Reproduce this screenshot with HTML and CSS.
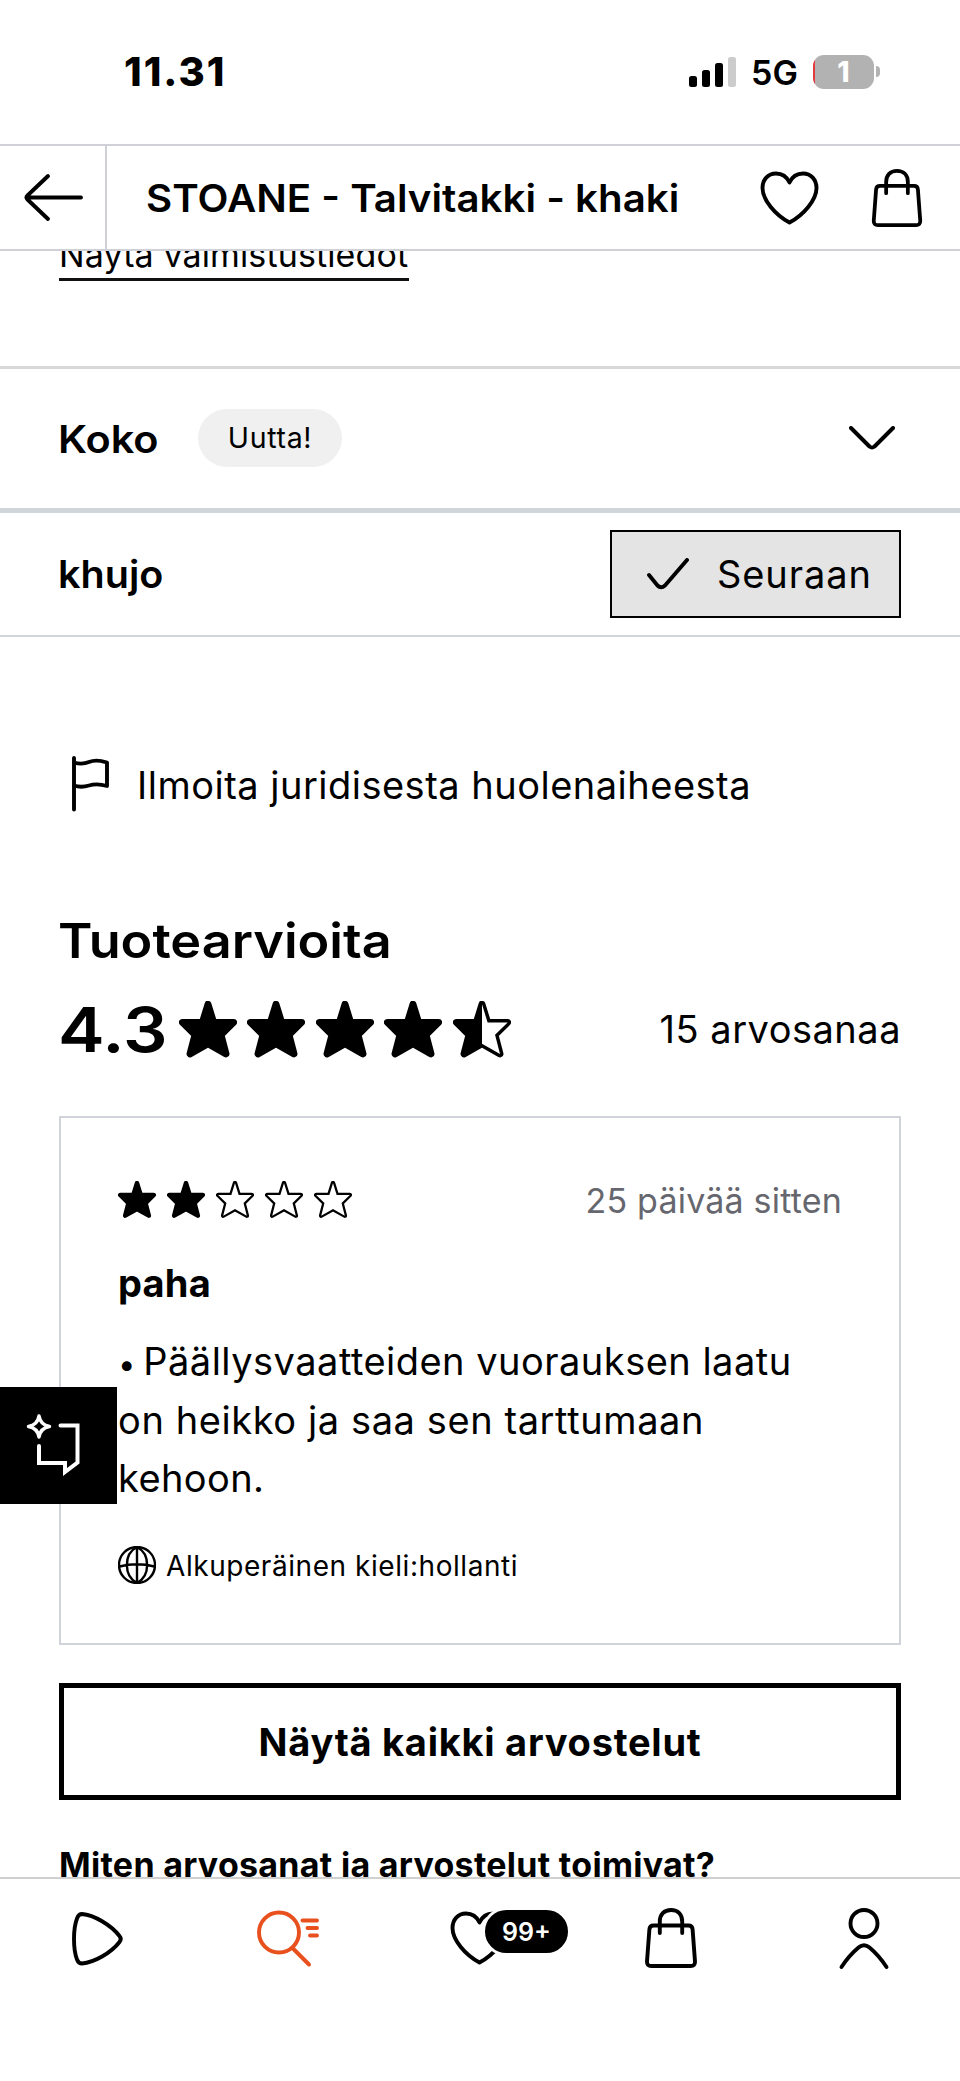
FILE: index.html
```html
<!DOCTYPE html>
<html lang="fi">
<head>
<meta charset="utf-8">
<title>STOANE - Talvitakki - khaki</title>
<link rel="stylesheet" href="styles.css">
</head>
<body>
<svg class="defs" aria-hidden="true">
  <defs>
    <path id="star-shape" d="M28.5 3.2 34 21H53.7L41.3 33.2 46.2 52 28.5 42 10.8 52 15.7 33.2 3.3 21H23Z"/>
    <symbol id="star-full" viewBox="0 0 57 56"><use href="#star-shape" class="star-ink"/></symbol>
    <symbol id="star-empty" viewBox="0 0 57 56"><use href="#star-shape" class="star-ink"/><use href="#star-shape" class="star-hole"/></symbol>
    <clipPath id="right-half"><rect x="28.5" y="0" width="29" height="56"/></clipPath>
    <symbol id="star-half" viewBox="0 0 57 56"><use href="#star-shape" class="star-ink"/><g clip-path="url(#right-half)"><use href="#star-shape" class="star-hole"/></g></symbol>
    <symbol id="heart" viewBox="0 0 64 64"><path d="M31.500 16.500C28.500 10 23 7.500 18 7.500 10 7.500 4.500 13.500 4.500 22 4.500 34 17.500 49 31.500 56.500 45.500 49 58.500 34 58.500 22 58.500 13.500 53 7.500 45 7.500 40 7.500 34.500 10 31.500 16.500Z"/></symbol>
    <symbol id="bag" viewBox="0 0 64 64"><path d="M14.500 19.500H49.500Q53.300 19.500 53.600 23.300L56 55.500Q56.200 60 51.700 60H12.300Q7.800 60 8 55.500L10.400 23.300Q10.700 19.500 14.500 19.500ZM20.800 27V15.500C20.800 8.500 25 4 32 4S43.200 8.500 43.200 15.500V27"/></symbol>
  </defs>
</svg>
<div class="screen">
  <div class="status">
    <span class="clock">11.31</span>
    <div class="signals">
      <svg class="bars" viewBox="0 0 48 32"><rect x="0" y="20" width="8" height="11" rx="2.500"/><rect x="13" y="14" width="8" height="17" rx="2.500"/><rect x="26" y="7" width="8" height="24" rx="2.500"/><rect class="bar-off" x="39" y="1" width="8" height="30" rx="2.500"/></svg>
      <span class="network">5G</span>
      <div class="battery"><span class="battery-level">1</span></div>
      <span class="battery-tip"></span>
    </div>
  </div>
  <header class="header">
    <a class="back"><svg class="icon" viewBox="0 0 64 64"><path d="M60 31.500H6M27 10 6.500 29.500Q4.500 31.500 6.500 33.500L27 53"/></svg></a>
    <h1 class="title"><span>STOANE - Talvitakki - khaki</span></h1>
    <svg class="icon header-heart"><use href="#heart"/></svg>
    <svg class="icon header-bag"><use href="#bag"/></svg>
  </header>
  <main class="content">
    <a class="details-link">Näytä valmistustiedot</a>
    <section class="size-row">
      <span class="row-label size-label">Koko</span>
      <span class="pill">Uutta!</span>
      <svg class="chevron" viewBox="0 0 46 24"><path d="M2 2 20.500 20.500Q23 22.500 25.500 20.500L44 2"/></svg>
    </section>
    <section class="brand-row">
      <span class="row-label brand-label">khujo</span>
      <button class="follow"><svg class="check" viewBox="0 0 42 32"><path d="M2 17 10.500 27.500Q14 31 18 27.500L40 2"/></svg><span>Seuraan</span></button>
    </section>
    <div class="report">
      <svg class="flag" viewBox="0 0 38 56"><path d="M3 2V53.500M3 6.500Q11 9 18 6T36 6.500V30Q26 27 18 29.500T3 29.500"/></svg>
      <span>Ilmoita juridisesta huolenaiheesta</span>
    </div>
    <h2 class="reviews-title"><span>Tuotearvioita</span></h2>
    <div class="summary">
      <div class="score"><span>4.3</span></div>
      <div class="stars stars-large"><svg><use href="#star-full"/></svg><svg><use href="#star-full"/></svg><svg><use href="#star-full"/></svg><svg><use href="#star-full"/></svg><svg><use href="#star-half"/></svg></div>
      <span class="count">15 arvosanaa</span>
    </div>
    <article class="card">
      <div class="card-top">
        <div class="stars stars-small"><svg><use href="#star-full"/></svg><svg><use href="#star-full"/></svg><svg><use href="#star-empty"/></svg><svg><use href="#star-empty"/></svg><svg><use href="#star-empty"/></svg></div>
        <span class="date">25 päivää sitten</span>
      </div>
      <h3 class="card-title">paha</h3>
      <p class="card-text"><span class="line-a"><span class="bullet">•</span>Päällysvaatteiden vuorauksen laatu</span><br><span class="line-b">on heikko ja saa sen tarttumaan</span><br>kehoon.</p>
      <div class="origin">
        <svg class="globe" viewBox="0 0 38 38"><circle cx="19" cy="19" r="18"/><path d="M19 1V37M1.500 20.500Q19 16 36.500 20.500M19 1C5.500 8 5.500 30 19 37M19 1C32.500 8 32.500 30 19 37"/></svg>
        <span>Alkuperäinen kieli:hollanti</span>
      </div>
    </article>
    <button class="all-reviews">Näytä kaikki arvostelut</button>
    <p class="how">Miten arvosanat ja arvostelut toimivat?</p>
  </main>
  <nav class="tabs">
    <a class="tab"><svg class="icon" viewBox="1 0 64 64"><path d="M19 8C31 9 48 19 56.500 30Q59 33 56.500 36C48 47 31 56.500 19 57.500Q15.500 57.500 14 53.500C10 43 10 23 14 12.500Q15.500 8 19 8Z"/></svg></a>
    <a class="tab tab-active"><svg class="icon" viewBox="0 0 64 64"><circle cx="23" cy="26.500" r="20"/><path d="M37 42.500 53 58.500M46.500 14.500H61M51.500 22H61M54 29.500H61"/></svg></a>
    <a class="tab"><svg class="icon"><use href="#heart"/></svg><span class="badge">99+</span></a>
    <a class="tab tab-bag"><svg class="icon"><use href="#bag"/></svg></a>
    <a class="tab"><svg class="icon" viewBox="0 0 64 64"><circle cx="32" cy="17.500" r="13.500"/><path d="M9.500 61Q17 49.500 26.500 41.500 32 37 37.500 41.500 47 49.500 54.500 61"/></svg></a>
  </nav>
  <a class="assistant"><svg viewBox="0 0 117 117"><path class="spark" d="M39 29Q40.500 38 49.500 39.500 40.500 41 39 50 37.500 41 28.500 39.500 37.500 38 39 29Z"/><path d="M60.500 38.500H77.500V75.500L65 85V76H39V59"/></svg></a>
</div>
</body>
</html>
```
FILE: styles.css
```css
* { box-sizing: border-box; }
body { margin: 0; background: #fff; color: #000; font-family: Inter, "Liberation Sans", sans-serif; font-size: 38px; white-space: nowrap; }
h1, h2, h3, p { margin: 0; font-weight: inherit; font-size: inherit; }
button { font: inherit; color: inherit; background: none; padding: 0; }
svg { display: block; flex: none; fill: none; stroke: #000; stroke-width: 3.900; stroke-linecap: round; stroke-linejoin: round; }
.defs { position: absolute; width: 0; height: 0; }
.screen { position: relative; display: flex; flex-direction: column; width: 960px; height: 2081px; overflow: hidden; }
.icon { width: 64px; height: 64px; }

.status { display: flex; justify-content: space-between; height: 144px; padding: 47px 80px 0 124px; }
.clock { font-size: 40px; font-weight: 800; line-height: 49px; letter-spacing: 2px; }
.signals { display: flex; align-items: center; width: 191px; height: 49px; }
.bars { width: 48px; height: 32px; fill: #000; stroke: none; }
.bar-off { fill: #ccc; }
.network { margin: 2px 0 0 14px; font-size: 34px; font-weight: 600; }
.battery { display: flex; align-items: center; justify-content: center; width: 61px; height: 34px; margin-left: auto; border-radius: 11px; background: linear-gradient(90deg, #e23b3f 2px, #b2b2b2 2px); }
.battery-level { color: #fff; font-size: 28px; font-weight: 800; }
.battery-tip { width: 4px; height: 11px; margin-left: 2px; border-radius: 0 6px 6px 0; background: #b2b2b2; }

.header { display: flex; align-items: center; height: 107px; border: solid #d0d1d8; border-width: 2px 0; }
.back { display: flex; align-items: center; width: 107px; height: 100%; padding-left: 21px; border-right: 2px solid #d0d1d8; }
.title { flex: 1; padding-left: 39px; font-weight: 600; }
.title span, .row-label, .reviews-title span, .score span { display: inline-block; transform-origin: left center; }
.title span { transform: scaleX(1.060); }
.header-heart { margin-right: 44px; }
.header-bag { width: 62px; height: 62px; margin-right: 32px; }

.content { height: 1626px; overflow: hidden; padding: 0 59px; }
.details-link { display: block; width: 350px; height: 52px; margin-top: -22px; border-bottom: 3px solid #111; font-size: 34px; line-height: 52px; letter-spacing: .120px; }
.size-row { display: flex; align-items: center; height: 142px; margin: 85px -59px 0; padding: 0 65px 0 58px; border-top: 3px solid #d6d8da; }
.row-label { font-weight: 600; transform: scaleX(1.090); }
.size-label { width: 140px; }
.pill { display: flex; align-items: center; justify-content: center; width: 144px; height: 58px; margin-bottom: 2px; border-radius: 29px; background: #f0f0f0; font-size: 28.500px; letter-spacing: .700px; }
.chevron { width: 46px; height: 24px; margin: 0 0 2px auto; }
.brand-row { display: flex; align-items: center; justify-content: space-between; height: 129px; margin: 0 -59px; padding: 0 59px 0 58px; border: solid #d0d5da; border-width: 5px 0 2px; }
.brand-label { transform: scaleX(1.040); }
.follow { display: flex; align-items: center; width: 291px; height: 88px; padding-left: 35px; gap: 28px; border: 2px solid #000; background: #e4e4e4; letter-spacing: .900px; }
.check { width: 42px; height: 32px; }
.report { display: flex; align-items: center; height: 58px; margin-top: 119px; padding-left: 12px; gap: 28px; letter-spacing: .490px; }
.flag { width: 38px; height: 56px; margin-bottom: 3px; }
.reviews-title { margin-top: 97px; font-size: 48px; line-height: 60px; font-weight: 600; }
.reviews-title span { margin-left: -1px; transform: scaleX(1.088); }
.summary { display: flex; align-items: center; height: 60px; margin-top: 28px; }
.score { width: 120px; font-size: 62px; font-weight: 600; }
.score span { margin-left: -1px; transform: scaleX(1.130); }
.stars { display: flex; }
.star-ink { fill: #000; stroke: #000; stroke-width: 6.800px; }
.star-hole { fill: #fff; stroke: none; }
.stars-large { gap: 10.400px; }
.stars-large svg { width: 58px; height: 57px; }
.stars-small { gap: 11px; }
.stars-small svg { width: 38px; height: 37.300px; }
.count { margin-left: auto; letter-spacing: .500px; }
.card { height: 529px; margin-top: 57px; padding: 62px 57px 0 57px; border: 2px solid #d0d4da; }
.card-top { display: flex; align-items: center; justify-content: space-between; height: 40px; }
.date { color: #66676e; font-size: 34px; letter-spacing: .200px; }
.card-title { margin-top: 38px; line-height: 50px; font-weight: 700; letter-spacing: .200px; }
.card-text { margin-top: 24px; line-height: 58.600px; letter-spacing: .400px; }
.bullet { display: inline-block; width: 25.300px; font-size: 31px; line-height: 1; }
.line-a { letter-spacing: .480px; }
.line-b { letter-spacing: .590px; }
.origin { display: flex; align-items: center; height: 40px; margin-top: 37px; gap: 10px; font-size: 28px; letter-spacing: .560px; }
.origin span { padding-top: 2px; }
.globe { width: 38px; height: 38px; stroke-width: 2.400; }
.all-reviews { display: block; width: 842px; height: 117px; margin-top: 38px; border: 5px solid #000; font-weight: 700; letter-spacing: .750px; }
.how { margin-top: 40px; font-size: 34px; line-height: 50px; font-weight: 700; letter-spacing: .280px; }

.tabs { display: grid; grid-template-columns: repeat(5, 1fr); height: 204px; padding-top: 27px; border-top: 2px solid #d0d0d0; }
.tab { position: relative; display: flex; justify-content: center; height: 64px; }
.tab-bag { padding-right: 3px; }
.tab-active svg { stroke: #e8501e; }
.badge { position: absolute; left: 98px; top: 1px; display: flex; align-items: center; justify-content: center; width: 89px; height: 49px; border: 3px solid #fff; border-radius: 25px; background: #000; color: #fff; font-size: 25px; font-weight: 600; }
.assistant { position: absolute; left: 0; top: 1387px; width: 117px; height: 117px; background: #000; }
.assistant svg { stroke: #fff; stroke-width: 4; stroke-linejoin: miter; }
.assistant .spark { stroke-linejoin: round; stroke-width: 3.500; }
```
